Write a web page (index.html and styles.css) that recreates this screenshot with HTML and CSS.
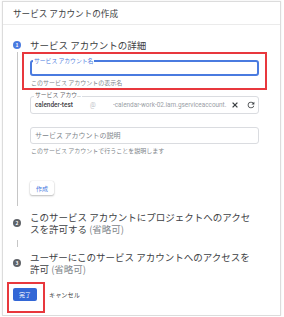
FILE: index.html
```html
<!DOCTYPE html>
<html lang="ja">
<head>
    <meta charset="UTF-8">
    <meta name="viewport" content="width=device-width, initial-scale=1.0">
    <title>サービス アカウントの作成</title>
    <link rel="stylesheet" href="styles.css">
</head>
<body>
    <div class="panel">
        <div class="panel-header">サービス アカウントの作成</div>

        <div class="steps">
            <div class="step-head first">
                <span class="step-num active">1</span>
                <span class="step-title">サービス アカウントの詳細</span>
            </div>
            <div class="step-body">
                <div class="highlight">
                    <div class="field focused">
                        <span class="field-label">サービス アカウント名</span>
                    </div>
                    <div class="hint">このサービス アカウントの表示名</div>
                </div>

                <div class="field id-field">
                    <span class="field-label">サービス アカウ…</span>
                    <span class="id-value">calender-test</span>
                    <span class="id-at">@</span>
                    <span class="id-domain">-calendar-work-02.iam.gserviceaccount.</span>
                    <svg class="icon-close" viewBox="0 0 6 6" width="6" height="6">
                        <path d="M0.6 0.6L5.4 5.4M5.4 0.6L0.6 5.4" stroke="#3c4043" stroke-width="1.3" fill="none"/>
                    </svg>
                    <svg class="icon-refresh" viewBox="0 0 24 24" width="10" height="10">
                        <path fill="#3c4043" d="M17.65 6.35C16.2 4.9 14.21 4 12 4c-4.42 0-7.99 3.58-7.99 8s3.57 8 7.99 8c3.73 0 6.84-2.55 7.73-6h-2.08c-.82 2.33-3.04 4-5.65 4-3.31 0-6-2.69-6-6s2.69-6 6-6c1.66 0 3.14.69 4.22 1.78L13 11h7V4l-2.35 2.35z"/>
                    </svg>
                </div>

                <div class="field desc-field">
                    <span class="placeholder">サービス アカウントの説明</span>
                </div>
                <div class="hint desc-hint">このサービス アカウントで行うことを説明します</div>

                <button class="create-button">作成</button>
            </div>

            <div class="step-head">
                <span class="step-num">2</span>
                <span class="step-title">このサービス アカウントにプロジェクトへのアクセスを許可する <span class="optional">(省略可)</span></span>
            </div>
            <div class="connector"></div>
            <div class="step-head">
                <span class="step-num">3</span>
                <span class="step-title">ユーザーにこのサービス アカウントへのアクセスを許可 <span class="optional">(省略可)</span></span>
            </div>
        </div>

        <div class="actions">
            <div class="highlight done-box">
                <button class="done-button">完了</button>
            </div>
            <button class="cancel-button">キャンセル</button>
        </div>
    </div>
</body>
</html>
```

FILE: styles.css
```css
* {
    box-sizing: border-box;
}

body {
    margin: 0;
    background: #fff;
    font-family: "Noto Sans CJK JP", "Noto Sans", sans-serif;
    color: #3c4043;
}

.panel {
    margin: 1px 3px 0 2px;
    height: 315px;
    border: 1px solid #dcdcdc;
    box-shadow: 0 0 2px rgba(0, 0, 0, 0.08);
}

.panel-header {
    height: 23px;
    line-height: 22px;
    padding-left: 10px;
    font-size: 8.6px;
    border-bottom: 1px solid #ebebeb;
}

.steps {
    padding: 13px 13px 0 10px;
}

.step-head {
    display: flex;
    align-items: center;
}

.step-num {
    flex-shrink: 0;
    width: 8px;
    height: 8px;
    border-radius: 50%;
    background: #5f6368;
    color: #fff;
    font-size: 5px;
    line-height: 8px;
    text-align: center;
    font-weight: 700;
}

.step-num.active {
    background: #4a7be0;
}

.step-title {
    margin: 0 12px 0 9px;
    font-size: 9.5px;
    line-height: 12px;
    color: #3c4043;
}

.step-head.first .step-title {
    line-height: 14px;
}

.optional {
    color: #80868b;
}

.step-body {
    margin-left: 4px;
    border-left: 1px solid #c6c6c6;
    padding: 0 0 11px 4px;
}

.highlight {
    border: 2px solid #e8383d;
    padding: 6px 6px 1px;
}

.field {
    position: relative;
    margin: 0 8px;
    border: 1px solid #dadce0;
    border-radius: 3px;
}

.field.focused {
    margin: 0;
    height: 16px;
    border: 2px solid #4a7be0;
}

.field-label {
    position: absolute;
    top: -5px;
    left: 3px;
    padding: 0 1px;
    background: #fff;
    font-size: 5.8px;
    line-height: 7px;
    color: #5f6368;
    white-space: nowrap;
}

.field.focused .field-label {
    left: 1px;
    color: #4a7be0;
}

.hint {
    margin-top: 2px;
    padding-left: 1px;
    font-size: 6px;
    line-height: 9px;
    color: #80868b;
}

.desc-hint {
    margin-left: 8px;
}

.id-field {
    display: flex;
    align-items: center;
    height: 18px;
    margin-top: 6px;
    padding: 0 2px 0 4px;
    font-family: Roboto, "Noto Sans CJK JP", sans-serif;
    font-size: 6.4px;
    white-space: nowrap;
}

.id-value {
    flex: 0 0 55px;
    color: #3c4043;
    font-weight: 500;
}

.id-at {
    flex: 0 0 23px;
    color: #bdc1c6;
}

.id-domain {
    flex: 1;
    min-width: 0;
    overflow: hidden;
    color: #9aa0a6;
}

.icon-close {
    flex-shrink: 0;
    margin: 0 8px 0 3px;
}

.icon-refresh {
    flex-shrink: 0;
}

.desc-field {
    height: 17px;
    margin-top: 13px;
    padding-left: 4px;
}

.placeholder {
    display: block;
    font-size: 7px;
    line-height: 15px;
    color: #80868b;
}

.create-button {
    display: block;
    width: 24px;
    height: 14px;
    margin: 26px 0 0 8px;
    padding: 0;
    border: none;
    border-radius: 2px;
    background: #fff;
    box-shadow: 0 1px 2px rgba(0, 0, 0, 0.25), 0 0 1px rgba(0, 0, 0, 0.2);
    font-family: inherit;
    font-size: 6px;
    color: #4a7be0;
}

.step-body + .step-head {
    margin-top: 5px;
}

.connector {
    margin: 5px 0 4px 4px;
    height: 7px;
    border-left: 1px solid #c6c6c6;
}

.actions {
    display: flex;
    align-items: flex-start;
    margin-top: 7px;
    padding-left: 4px;
}

.done-box {
    padding: 4px 6px 10px 4px;
}

.done-button {
    display: block;
    width: 24px;
    height: 13px;
    padding: 0;
    border: none;
    border-radius: 2px;
    background: #3367d6;
    color: #fff;
    font-family: inherit;
    font-size: 6px;
}

.cancel-button {
    margin: 6px 0 0 4px;
    height: 13px;
    padding: 0;
    border: none;
    background: none;
    font-family: inherit;
    font-size: 6.2px;
    line-height: 13px;
    color: #3c4043;
}
```
